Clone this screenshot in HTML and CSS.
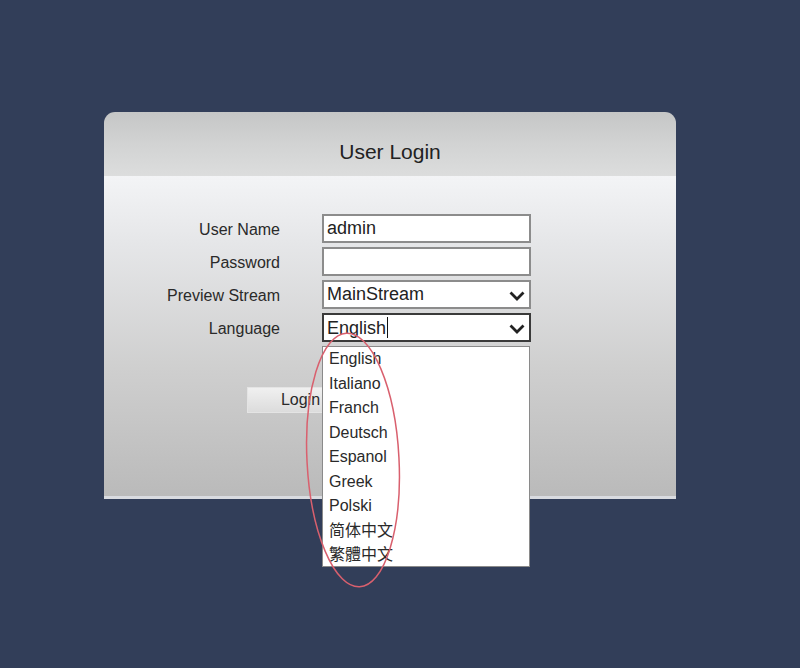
FILE: index.html
```html
<!DOCTYPE html>
<html lang="en">
<head>
    <meta charset="UTF-8">
    <title>User Login</title>
    <link rel="stylesheet" href="styles.css">
</head>
<body>
    <div class="login-box">
        <div class="login-header">
            <h1>User Login</h1>
        </div>
        <div class="login-body">
            <div class="login-form">
                <label class="form-label">User Name</label>
                <div class="field">admin</div>

                <label class="form-label">Password</label>
                <div class="field"></div>

                <label class="form-label">Preview Stream</label>
                <div class="field select">
                    <span>MainStream</span>
                    <svg class="chevron" viewBox="0 0 16 10"><path d="M1.5 1.5 L8 8 L14.5 1.5"/></svg>
                </div>

                <label class="form-label">Language</label>
                <div class="field select focused">
                    <span>English<i class="caret"></i></span>
                    <svg class="chevron" viewBox="0 0 16 10"><path d="M1.5 1.5 L8 8 L14.5 1.5"/></svg>
                    <!-- open language list -->
                    <ul class="dropdown">
                        <li>English</li>
                        <li>Italiano</li>
                        <li>Franch</li>
                        <li>Deutsch</li>
                        <li>Espanol</li>
                        <li>Greek</li>
                        <li>Polski</li>
                        <li class="cjk-sc">简体中文</li>
                        <li class="cjk-tc">繁體中文</li>
                    </ul>
                </div>
            </div>
            <div class="button-row">
                <button class="login-button">Login</button>
            </div>
        </div>
    </div>

    <!-- hand-drawn mark around the list -->
    <svg class="mark" width="800" height="668" viewBox="0 0 800 668">
        <ellipse cx="353" cy="460" rx="46" ry="127" transform="rotate(-3 353 460)"/>
    </svg>
</body>
</html>
```

FILE: styles.css
```css
body {
    font-family: "Liberation Sans", Arial, sans-serif;
    background-color: #323e59;
    margin: 0;
    padding: 112px 0 0 104px;
    height: 668px;
    box-sizing: border-box;
    overflow: hidden;
}
.login-box {
    width: 572px;
    border-radius: 11px 11px 0 0;
}
.login-header {
    height: 64px;
    border-radius: 11px 11px 0 0;
    background: linear-gradient(#c5c6c6, #d2d3d3 50%, #dcdddd);
    display: flex;
    align-items: center;
    justify-content: center;
}
.login-header h1 {
    margin: 16px 0 0 0;
    font-size: 21px;
    font-weight: normal;
    color: #222;
}
.login-body {
    height: 323px;
    padding-top: 38px;
    box-sizing: border-box;
    background: linear-gradient(#f3f4f6, #e6e7e9 20%, #cfcfcf 60%, #bababa);
    border-bottom: 3px solid #d9dbe0;
    position: relative;
}
.login-form {
    display: grid;
    grid-template-columns: 176px 209px;
    column-gap: 42px;
    row-gap: 4px;
    align-items: center;
}
.form-label {
    text-align: right;
    font-size: 16px;
    color: #2a2a2a;
    padding-top: 3px;
}
.field {
    height: 29px;
    box-sizing: border-box;
    border: 2px solid #8c8c8c;
    background: #fff;
    font-size: 18px;
    color: #222;
    padding: 2px 0 0 3px;
    position: relative;
}
.select {
    display: flex;
    justify-content: space-between;
}
.focused {
    border-color: #3a3a3a;
}
.caret {
    display: inline-block;
    width: 1px;
    height: 21px;
    background: #111;
    vertical-align: -4px;
    margin-left: 1px;
}
.chevron {
    width: 16px;
    height: 10px;
    margin: 7px 4px 0 0;
    fill: none;
    stroke: #222;
    stroke-width: 2.8;
}
.dropdown {
    position: absolute;
    left: -2px;
    top: 31px;
    width: 208px;
    height: 221px;
    box-sizing: border-box;
    margin: 0;
    padding: 0 0 0 6px;
    list-style: none;
    background: #fff;
    border: 1px solid #8a8a8a;
    z-index: 2;
}
.dropdown li {
    font-size: 16px;
    line-height: 24.5px;
    color: #2a2a2a;
}
.cjk-sc {
    font-family: "Liberation Sans", "Noto Sans CJK SC", sans-serif;
}
.cjk-tc {
    font-family: "Liberation Sans", "Noto Sans CJK TC", sans-serif;
}
.button-row {
    padding: 45px 0 0 143px;
}
.login-button {
    width: 107px;
    height: 26px;
    font-family: "Liberation Sans", Arial, sans-serif;
    font-size: 16px;
    color: #2a2a2a;
    border: 1px solid #e4e4e4;
    background: linear-gradient(#f0f0f0, #dcdcdc);
    padding: 0;
}
.mark {
    position: absolute;
    left: 0;
    top: 0;
    pointer-events: none;
    z-index: 5;
}
.mark ellipse {
    fill: none;
    stroke: #d9606e;
    stroke-width: 1.5;
}
```
